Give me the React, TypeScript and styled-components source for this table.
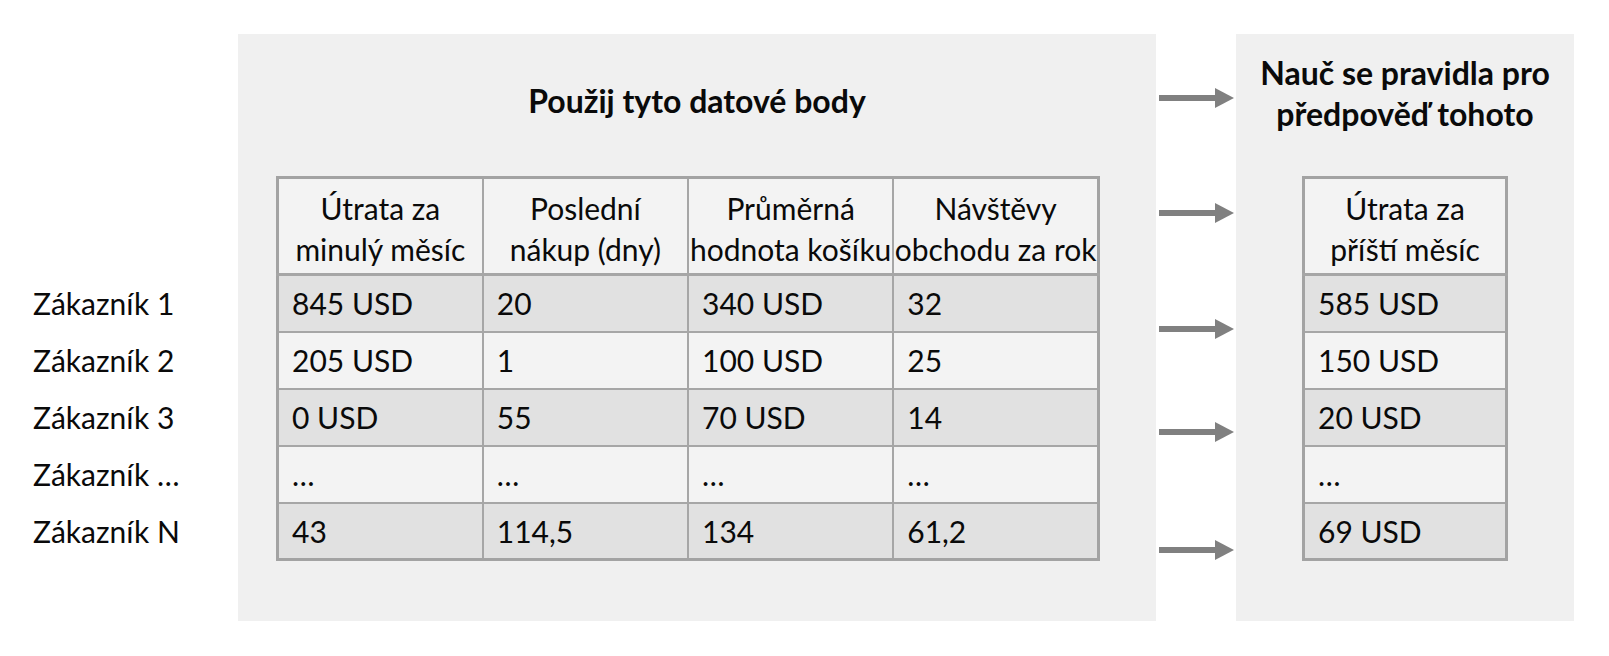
import React from "react";
import styled, { createGlobalStyle } from "styled-components";

const GlobalStyle = createGlobalStyle`
  html, body {
    margin: 0;
    padding: 0;
    background: #ffffff;
  }
  body {
    font-family: "Lato", "Noto Sans", sans-serif;
    color: #0a0a0a;
  }
`;

const Page = styled.div`
  display: flex;
  align-items: flex-start;
  width: 1609px;
  height: 656px;
  padding-top: 34px;
  box-sizing: border-box;
`;

const LabelColumn = styled.div`
  width: 238px;
  flex: none;
  box-sizing: border-box;
  padding: 240px 0 0 33px;
  display: flex;
  flex-direction: column;
`;

const RowLabel = styled.div`
  height: 57px;
  display: flex;
  align-items: center;
  font-size: 30px;
  white-space: nowrap;
`;

const Panel = styled.section<{ $width: number }>`
  width: ${(p) => p.$width}px;
  height: 587px;
  flex: none;
  background: #f0f0f0;
  box-sizing: border-box;
  display: flex;
  flex-direction: column;
`;

const LeftPanel = styled(Panel)`
  padding: 47px 0 0 38px;
`;

const RightPanel = styled(Panel)`
  padding-top: 18px;
  align-items: center;
`;

const Title = styled.h2`
  margin: 0;
  font-size: 32px;
  font-weight: 700;
  line-height: 40px;
  text-align: center;
  white-space: nowrap;
`;

const LeftTitle = styled(Title)`
  width: 918px;
  margin-left: -38px;
  margin-bottom: 55px;
`;

const RightTitle = styled(Title)`
  line-height: 41px;
  margin-bottom: 42px;
`;

const Table = styled.table<{ $cols: number }>`
  border-collapse: collapse;
  table-layout: fixed;
  width: ${(p) => p.$cols * 206}px;
  border: 3px solid #a3a3a3;
`;

const HeadCell = styled.th`
  height: 97px;
  padding: 6px 0 0 0;
  box-sizing: border-box;
  background: #f3f3f3;
  border: 2px solid #a6a6a6;
  border-bottom-width: 3px;
  font-weight: 400;
  font-size: 30px;
  line-height: 41px;
  text-align: center;
  white-space: nowrap;
  vertical-align: middle;
`;

const Cell = styled.td<{ $shade: boolean }>`
  height: 57px;
  padding: 0 0 0 13px;
  box-sizing: border-box;
  background: ${(p) => (p.$shade ? "#e1e1e1" : "#f3f3f3")};
  border: 2px solid #a6a6a6;
  font-size: 30px;
  line-height: 40px;
  white-space: nowrap;
  vertical-align: middle;
`;

const ArrowColumn = styled.div`
  width: 80px;
  flex: none;
  display: flex;
  flex-direction: column;
  padding-left: 3px;
  box-sizing: border-box;
`;

const ArrowWrap = styled.div<{ $gap: number }>`
  margin-top: ${(p) => p.$gap}px;
  height: 20px;
  width: 76px;
  position: relative;
  z-index: 1;
`;

const Arrow = ({ gap }: { gap: number }) => (
  <ArrowWrap $gap={gap}>
    <svg width="76" height="20" viewBox="0 0 76 20">
      <rect x="0" y="7" width="58" height="6" fill="#808080" />
      <polygon points="56,0 75,10 56,20" fill="#808080" />
    </svg>
  </ArrowWrap>
);

const headers = [
  ["Útrata za", "minulý měsíc"],
  ["Poslední", "nákup (dny)"],
  ["Průměrná", "hodnota košíku"],
  ["Návštěvy", "obchodu za rok"],
];

const rows = [
  ["845 USD", "20", "340 USD", "32"],
  ["205 USD", "1", "100 USD", "25"],
  ["0 USD", "55", "70 USD", "14"],
  ["…", "…", "…", "…"],
  ["43", "114,5", "134", "61,2"],
];

const targets = ["585 USD", "150 USD", "20 USD", "…", "69 USD"];

const labels = ["Zákazník 1", "Zákazník 2", "Zákazník 3", "Zákazník …", "Zákazník N"];

const arrowGaps = [54, 95, 96, 83, 98];

export default function App() {
  return (
    <>
      <GlobalStyle />
      <Page>
        <LabelColumn>
          {labels.map((l) => (
            <RowLabel key={l}>{l}</RowLabel>
          ))}
        </LabelColumn>
        <LeftPanel $width={918}>
          <LeftTitle>Použij tyto datové body</LeftTitle>
          <Table $cols={4}>
            <thead>
              <tr>
                {headers.map((h) => (
                  <HeadCell key={h[0]}>
                    {h[0]}
                    <br />
                    {h[1]}
                  </HeadCell>
                ))}
              </tr>
            </thead>
            <tbody>
              {rows.map((r, i) => (
                <tr key={i}>
                  {r.map((c, j) => (
                    <Cell key={j} $shade={i % 2 === 0}>
                      {c}
                    </Cell>
                  ))}
                </tr>
              ))}
            </tbody>
          </Table>
        </LeftPanel>
        <ArrowColumn>
          {arrowGaps.map((g, i) => (
            <Arrow key={i} gap={g} />
          ))}
        </ArrowColumn>
        <RightPanel $width={338}>
          <RightTitle>
            Nauč se pravidla pro
            <br />
            předpověď tohoto
          </RightTitle>
          <Table $cols={1}>
            <thead>
              <tr>
                <HeadCell>
                  Útrata za
                  <br />
                  příští měsíc
                </HeadCell>
              </tr>
            </thead>
            <tbody>
              {targets.map((t, i) => (
                <tr key={i}>
                  <Cell $shade={i % 2 === 0}>{t}</Cell>
                </tr>
              ))}
            </tbody>
          </Table>
        </RightPanel>
      </Page>
    </>
  );
}
